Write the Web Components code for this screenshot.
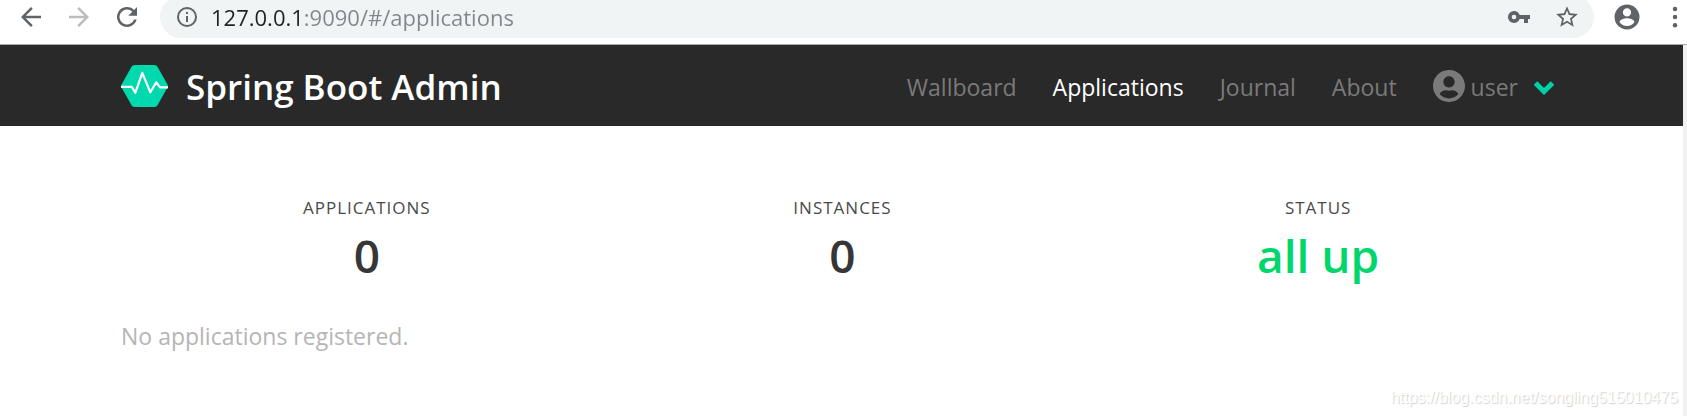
<!DOCTYPE html>
<html lang="en">
<head>
<meta charset="utf-8">
<title>Spring Boot Admin</title>
<style>
  body {
    margin: 0;
    background: #fff;
    font-family: "Segoe UI", "Open Sans", "Noto Sans", sans-serif;
    font-size: 23px;
    line-height: 36px;
    overflow: hidden;
  }
</style>
</head>
<body>
<admin-window></admin-window>
<script>
const icons = {
  back: "<path d='M20 11H7.8l5.6-5.6L12 4l-8 8 8 8 1.4-1.4L7.8 13H20z'/>",
  forward: "<path d='M4 11h12.2l-5.6-5.6L12 4l8 8-8 8-1.4-1.4 5.6-5.6H4z'/>",
  reload: "<path d='M17.65 6.35A8 8 0 1 0 19.73 14h-2.08A6 6 0 1 1 12 6c1.66 0 3.14.69 4.22 1.78L13 11h7V4z'/>",
  info: "<path d='M11 7h2v2h-2zm0 4h2v6h-2zm1-9a10 10 0 1 0 0 20 10 10 0 0 0 0-20zm0 18a8 8 0 1 1 0-16 8 8 0 0 1 0 16z'/>",
  key: "<path d='M12.65 10A6 6 0 0 0 7 6a6 6 0 1 0 5.65 8H17v4h4v-4h2v-4zM7 14.3a2.3 2.3 0 1 1 0-4.6 2.3 2.3 0 0 1 0 4.6z'/>",
  star: "<path d='M22 9.24l-7.19-.62L12 2 9.19 8.63 2 9.24l5.46 4.73L5.82 21 12 17.27 18.18 21l-1.63-7.03zM12 15.4l-3.76 2.27 1-4.28-3.32-2.88 4.38-.38L12 6.1l1.71 4.04 4.38.38-3.32 2.88 1 4.28z'/>",
  user: "<path d='M12 2a10 10 0 1 0 0 20 10 10 0 0 0 0-20zm0 3a3.3 3.3 0 1 1 0 6.6A3.3 3.3 0 0 1 12 5zm0 14.2a7.2 7.2 0 0 1-6-3.22c.03-1.99 4-3.08 6-3.08s5.97 1.09 6 3.08a7.2 7.2 0 0 1-6 3.22z'/>",
  menu: "<circle cx='12' cy='5.5' r='1.8'/><circle cx='12' cy='12' r='1.8'/><circle cx='12' cy='18.5' r='1.8'/>",
  // head and shoulders cut out of a disc
  account: "<path transform='translate(0 -.39) scale(.0484)' d='M248 8C111 8 0 119 0 256s111 248 248 248 248-111 248-248S385 8 248 8zm0 96c48.6 0 88 39.4 88 88s-39.4 88-88 88-88-39.4-88-88 39.4-88 88-88zm0 344c-58.7 0-111.3-26.6-146.5-68.2 18.8-35.4 55.6-59.8 98.5-59.8 2.4 0 4.8.4 7.1 1.1 13 4.2 26.6 6.9 40.9 6.9 14.3 0 28-2.7 40.9-6.9 2.3-.7 4.7-1.1 7.1-1.1 42.9 0 79.700 24.4 98.5 59.8C359.3 421.4 306.7 448 248 448z'/>",
  chevron: "<path d='M3.5 8l8.5 8.5L20.5 8' fill='none' stroke='currentColor' stroke-width='5'/>"
};

class SbaIcon extends HTMLElement {
  constructor() {
    super();
    this.attachShadow({ mode: "open" });
  }

  static get styles() {
    return /* css */`
      :host {
        display: block;
        flex: none;
        width: 24px;
        height: 24px;
      }
      svg {
        display: block;
        width: 100%;
        height: 100%;
        fill: currentColor;
      }
    `;
  }

  connectedCallback() {
    this.shadowRoot.innerHTML = /* html */`
    <style>${SbaIcon.styles}</style>
    <svg viewBox="0 0 24 24" aria-hidden="true">${icons[this.getAttribute("name")]}</svg>`;
  }
}

class BrowserBar extends HTMLElement {
  constructor() {
    super();
    this.attachShadow({ mode: "open" });
  }

  static get styles() {
    return /* css */`
      :host {
        display: flex;
        align-items: center;
        gap: 18px;
        margin-top: -4px;
        padding: 0 0 6px 16px;
        border-bottom: 1px solid #a9a9ab;
        background: #fff;
        color: #5f6368;
      }
      button {
        flex: none;
        padding: 0;
        border: 0;
        background: none;
        color: inherit;
      }
      button:disabled {
        color: #babcbe;
      }
      .large {
        width: 30px;
        height: 30px;
      }
      .star {
        width: 26px;
        height: 26px;
      }
      .more {
        margin-right: -3px;
      }
      .address {
        display: flex;
        flex: 1;
        align-items: center;
        gap: 12px;
        height: 42px;
        padding: 0 14px 0 15px;
        border-radius: 21px;
        background: #f0f4f5;
      }
      .address button + button {
        margin-left: 11px;
      }
      input {
        flex: 1;
        min-width: 0;
        height: 34px;
        padding: 0;
        border: 0;
        outline: 0;
        font: inherit;
        font-size: 22px;
        /* host part dark, path grey */
        color: transparent;
        background: linear-gradient(90deg, #202124 88px, #80868b 88px);
        -webkit-background-clip: text;
        background-clip: text;
      }
    `;
  }

  connectedCallback() {
    this.shadowRoot.innerHTML = /* html */`
    <style>${BrowserBar.styles}</style>
    <button aria-label="Back"><sba-icon class="large" name="back"></sba-icon></button>
    <button aria-label="Forward" disabled><sba-icon class="large" name="forward"></sba-icon></button>
    <button aria-label="Reload"><sba-icon class="large" name="reload"></sba-icon></button>
    <div class="address">
      <button aria-label="Site information"><sba-icon name="info"></sba-icon></button>
      <input type="text" aria-label="Address" spellcheck="false" value="127.0.0.1:9090/#/applications">
      <button aria-label="Passwords"><sba-icon name="key"></sba-icon></button>
      <button aria-label="Bookmark"><sba-icon class="star" name="star"></sba-icon></button>
    </div>
    <button aria-label="Profile"><sba-icon class="large" name="user"></sba-icon></button>
    <button class="more" aria-label="More"><sba-icon class="large" name="menu"></sba-icon></button>`;
  }
}

class SbaNavbar extends HTMLElement {
  constructor() {
    super();
    this.attachShadow({ mode: "open" });
  }

  static get styles() {
    return /* css */`
      :host {
        display: flex;
        align-items: center;
        justify-content: space-between;
        height: 81px;
        padding: 0 127px 0 121px;
        background: #292929;
        color: #7a7a7a;
      }
      a {
        color: inherit;
        text-decoration: none;
      }
      .brand {
        display: flex;
        align-items: center;
        gap: 18px;
        color: #fff;
        font-size: 35px;
        font-weight: 600;
      }
      .brand svg {
        width: 47px;
        height: 42px;
      }
      span,
      nav a,
      .chevron {
        padding-top: 3px;
      }
      nav {
        display: flex;
        align-items: center;
        gap: 36px;
      }
      .active {
        color: #fff;
      }
      .user {
        display: flex;
        align-items: center;
        gap: 6px;
        padding: 0;
        border: 0;
        background: none;
        color: inherit;
        font: inherit;
      }
      .account {
        width: 32px;
        height: 32px;
      }
      .chevron {
        margin-left: 8px;
        color: #00d1a7;
      }
    `;
  }

  connectedCallback() {
    this.shadowRoot.innerHTML = /* html */`
    <style>${SbaNavbar.styles}</style>
    <a class="brand" href="#/">
      <svg viewBox="0 0 47 42" aria-hidden="true">
        <path fill="#00d8ae" d="M13.5 0h20q2 0 3 1.700L46.5 19.5q.8 1.5 0 3L36.5 40.3q-1 1.7-3 1.7h-20q-2 0-3-1.7L.5 22.5q-.8-1.5 0-3L10.5 1.7q1-1.7 3-1.7z"/>
        <path fill="none" stroke="#fff" stroke-width="2.2" stroke-linejoin="round" d="M0 21.8h10.7l3.6 6 7-20 8 19.5 6-10 3.7 5h8"/>
      </svg>
      <span>Spring Boot Admin</span>
    </a>
    <nav>
      <a href="#/wallboard">Wallboard</a>
      <a class="active" href="#/applications">Applications</a>
      <a href="#/journal">Journal</a>
      <a href="#/about">About</a>
      <button class="user">
        <sba-icon class="account" name="account"></sba-icon>
        <span>user</span>
        <sba-icon class="chevron" name="chevron"></sba-icon>
      </button>
    </nav>`;
  }
}

class SbaStat extends HTMLElement {
  constructor() {
    super();
    this.attachShadow({ mode: "open" });
  }

  static get styles() {
    return /* css */`
      :host {
        display: block;
        text-align: center;
        color: #363636;
      }
      p {
        margin: 0;
      }
      .heading {
        margin-bottom: 8px;
        font-size: 17px;
        line-height: 24px;
        letter-spacing: 1px;
        text-transform: uppercase;
        color: #4a4a4a;
      }
      .title {
        font-size: 46px;
        font-weight: 600;
        line-height: 54px;
      }
      :host([up]) .title {
        color: #00d66b;
      }
    `;
  }

  connectedCallback() {
    this.shadowRoot.innerHTML = /* html */`
    <style>${SbaStat.styles}</style>
    <p class="heading">${this.getAttribute("heading")}</p>
    <p class="title"><slot></slot></p>`;
  }
}

class AdminWindow extends HTMLElement {
  constructor() {
    super();
    this.attachShadow({ mode: "open" });
  }

  static get styles() {
    return /* css */`
      :host {
        display: flex;
        flex-direction: column;
        position: relative;
        min-height: 100vh;
      }
      .view {
        flex: 1;
        border-right: 4px solid #f1f1f1;
      }
      main {
        padding: 70px 121px 0;
      }
      .stats {
        display: grid;
        grid-template-columns: repeat(3, 1fr);
        padding: 0 6px 0 8px;
      }
      .empty {
        margin: 36px 0 0;
        color: #b5b5b5;
      }
      /* sits over the page's bottom right corner */
      .watermark {
        position: absolute;
        right: 9px;
        bottom: 6px;
        font: 16px/24px "Liberation Sans", Arial, sans-serif;
        color: #fff;
        text-shadow: 1px 1px 1px #d0d0d0;
      }
    `;
  }

  connectedCallback() {
    this.shadowRoot.innerHTML = /* html */`
    <style>${AdminWindow.styles}</style>
    <browser-bar></browser-bar>
    <div class="view">
      <sba-navbar></sba-navbar>
      <main>
        <div class="stats">
          <sba-stat heading="Applications">0</sba-stat>
          <sba-stat heading="Instances">0</sba-stat>
          <sba-stat heading="Status" up>all up</sba-stat>
        </div>
        <p class="empty">No applications registered.</p>
      </main>
    </div>
    <div class="watermark">https://blog.csdn.net/songling515010475</div>`;
  }
}

customElements.define("sba-icon", SbaIcon);
customElements.define("browser-bar", BrowserBar);
customElements.define("sba-navbar", SbaNavbar);
customElements.define("sba-stat", SbaStat);
customElements.define("admin-window", AdminWindow);
</script>
</body>
</html>
